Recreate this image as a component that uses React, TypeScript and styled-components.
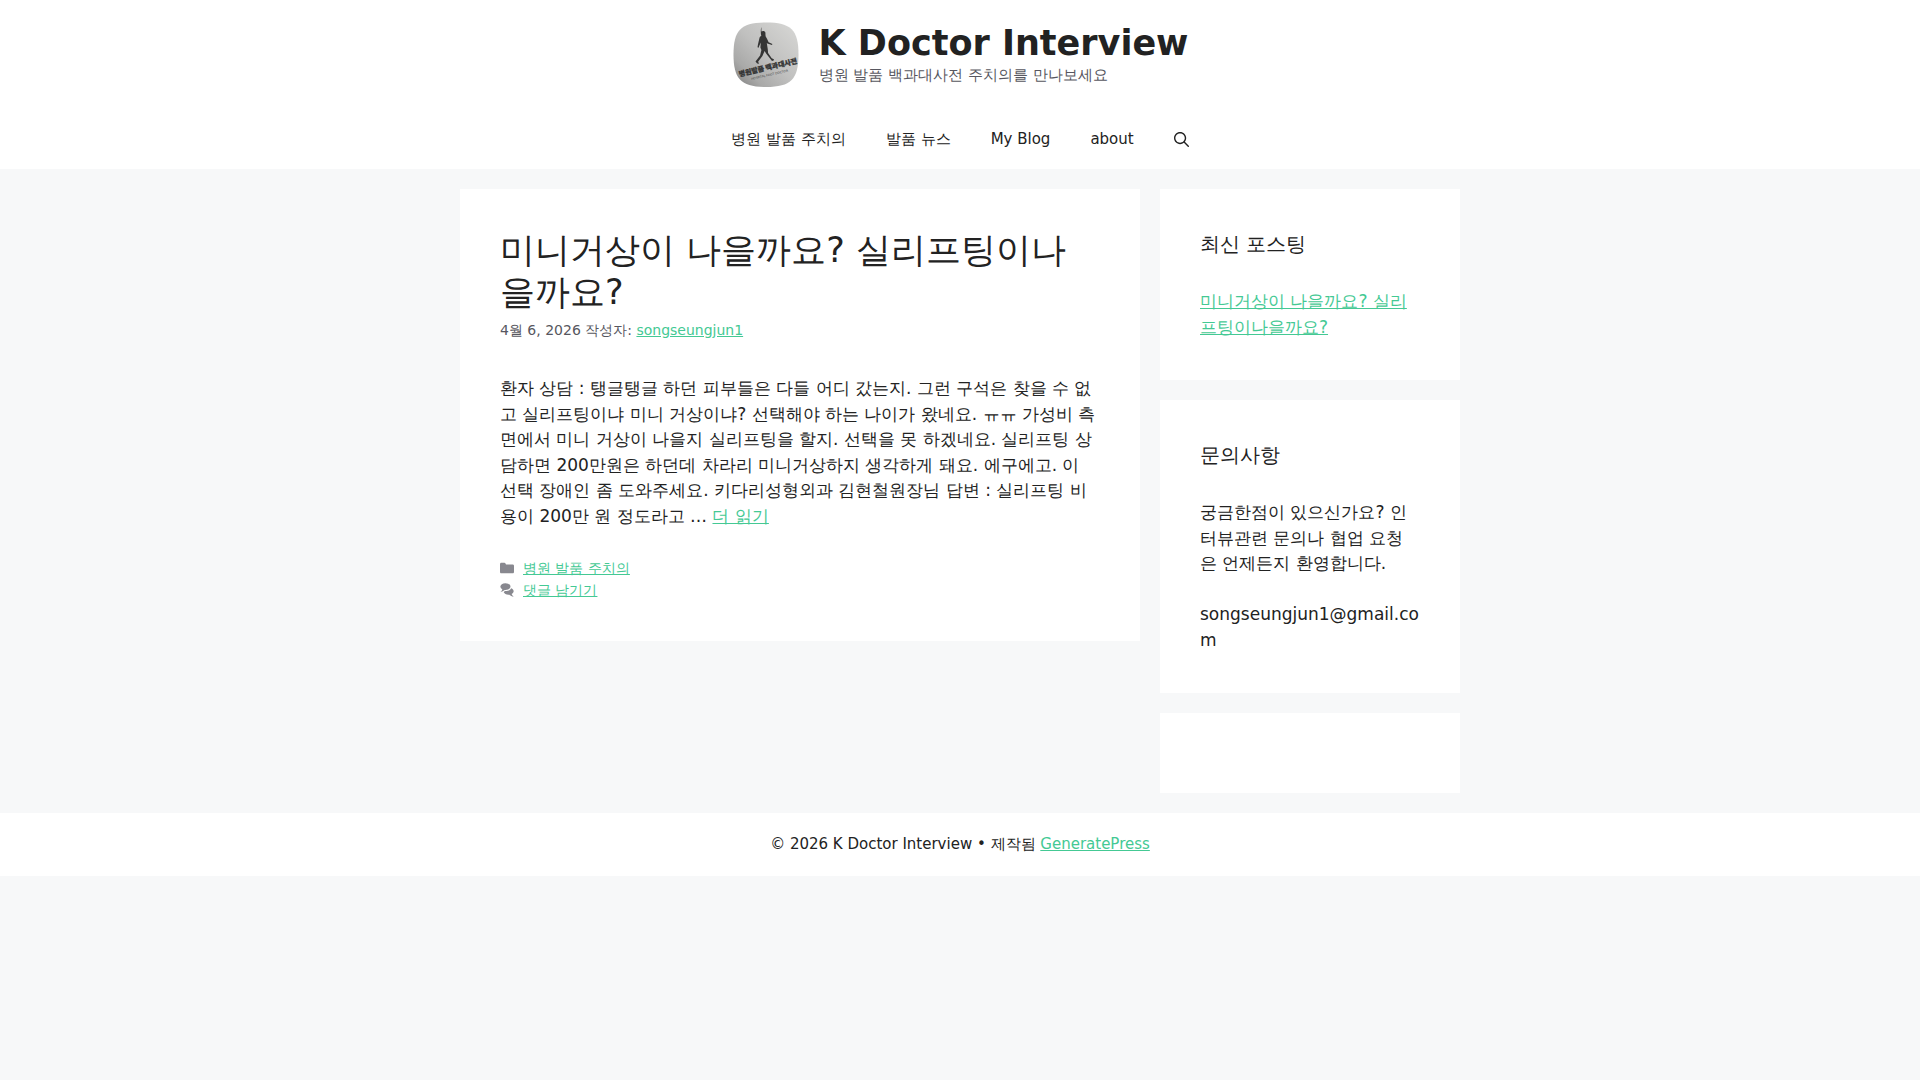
import React from 'react';
import styled, { createGlobalStyle } from 'styled-components';

const color = {
  page: '#f7f8f9',
  panel: '#ffffff',
  text: '#222222',
  muted: '#575760',
  link: '#44c994',
};

const GlobalStyle = createGlobalStyle`
  *, *::before, *::after { box-sizing: border-box; }
  body {
    margin: 0;
    background: ${color.page};
    color: ${color.text};
    font-family: "DejaVu Sans", sans-serif;
    font-size: 17px;
    line-height: 1.5;
    overflow-wrap: break-word;
  }
  h1, h2, p, ul { margin: 0; padding: 0; font-weight: 400; }
  ul { list-style: none; }
`;

const Link = styled.a`
  color: ${color.link};
  text-decoration: underline;
`;

const Header = styled.header`
  display: flex;
  justify-content: center;
  padding: 20px 40px;
  background: ${color.panel};
`;

const Branding = styled.div`
  display: flex;
  align-items: center;
  gap: 17px;
`;

const LogoLink = styled.a`
  display: block;
  svg { display: block; width: 70px; height: 69px; }
`;

const SiteTitle = styled.p`
  font-size: 35px;
  font-weight: 700;
  line-height: 42px;
  a { color: inherit; text-decoration: none; }
`;

const Tagline = styled.p`
  color: ${color.muted};
  font-size: 15px;
`;

const Nav = styled.nav`
  display: flex;
  justify-content: center;
  background: ${color.panel};
`;

const Menu = styled.ul`
  display: flex;
  flex-wrap: wrap;
  font-size: 15px;
  line-height: 60px;
`;

const MenuLink = styled.a`
  display: block;
  padding: 0 20px;
  color: ${color.text};
  text-decoration: none;
`;

const SearchButton = styled.button`
  display: flex;
  align-items: center;
  height: 60px;
  padding: 0 20px;
  border: 0;
  background: none;
  color: ${color.text};
  cursor: pointer;
`;

const Icon = styled.svg<{ $size: number }>`
  flex: none;
  width: ${(p) => p.$size}px;
  height: ${(p) => p.$size}px;
  fill: currentColor;
`;

const Columns = styled.div`
  display: grid;
  grid-template-columns: minmax(0, 1fr) 300px;
  align-items: start;
  gap: 20px;
  max-width: 1000px;
  margin: 0 auto;
  padding: 20px 0;

  @media (max-width: 768px) {
    grid-template-columns: minmax(0, 1fr);
  }
`;

const Article = styled.article`
  padding: 40px;
  background: ${color.panel};
`;

const EntryTitle = styled.h2`
  font-size: 35px;
  line-height: 42px;
  a { color: inherit; text-decoration: none; }
`;

const Meta = styled.div`
  margin-top: 6px;
  color: ${color.muted};
  font-size: 14px;
  line-height: 22px;
`;

const Summary = styled.p`
  margin-top: 35px;
`;

const EntryFooter = styled.footer`
  margin-top: 28px;
  color: ${color.muted};
  font-size: 14px;
  line-height: 22px;
`;

const FooterRow = styled.div`
  display: flex;
  align-items: center;
  gap: 9px;
  svg { opacity: 0.7; }
`;

const Sidebar = styled.aside`
  display: grid;
  gap: 20px;
`;

const Widget = styled.section`
  min-width: 0;
  padding: 40px;
  background: ${color.panel};
`;

const WidgetTitle = styled.h2`
  margin-bottom: 30px;
  font-size: 20px;
`;

const SiteFooter = styled.footer`
  padding: 20px 40px;
  background: ${color.panel};
  font-size: 15px;
  text-align: center;
`;

const SEARCH =
  'M208 48c-88.366 0-160 71.634-160 160s71.634 160 160 160 160-71.634 160-160S296.366 48 208 48zM0 208C0 93.125 93.125 0 208 0s208 93.125 208 208c0 48.741-16.765 93.566-44.843 129.024l133.826 134.018c9.366 9.379 9.355 24.575-.025 33.941-9.379 9.366-24.575 9.355-33.941-.025L337.238 370.987C301.747 399.167 256.839 416 208 416 93.125 416 0 322.875 0 208z';
const FOLDER =
  'M0 112c0-26.51 21.49-48 48-48h110.014a48 48 0 0143.592 27.907l12.349 26.791A16 16 0 00228.486 128H464c26.51 0 48 21.49 48 48v224c0 26.51-21.49 48-48 48H48c-26.51 0-48-21.49-48-48V112z';
const COMMENTS =
  'M132.838 329.973a435.298 435.298 0 0016.769-9.004c13.363-7.574 26.587-16.142 37.419-25.507 7.544.597 15.27.925 23.098.925 54.905 0 105.634-15.311 143.285-41.28 23.728-16.365 43.115-37.692 54.155-62.645 54.739 22.205 91.498 63.272 91.498 110.286 0 42.186-29.558 79.498-75.09 102.828 23.46 49.216 75.09 101.709 75.09 101.709s-115.837-38.35-154.424-78.46c-9.956 1.12-20.297 1.758-30.793 1.758-88.727 0-162.927-43.071-181.007-100.61z M383.371 132.502c0 70.603-82.961 127.787-185.216 127.787-10.496 0-20.837-.639-30.793-1.757-38.587 40.093-154.424 78.42-154.424 78.42s51.63-52.472 75.09-101.67c-45.532-23.321-75.09-60.619-75.09-102.78C12.938 61.9 95.9 4.716 198.155 4.716 300.41 4.715 383.37 61.9 383.37 132.502z';

const menu = ['병원 발품 주치의', '발품 뉴스', 'My Blog', 'about'];

function Logo() {
  return (
    <svg viewBox="0 0 70 69" role="img" aria-label="K Doctor Interview">
      <defs>
        <linearGradient id="stone" x1="1" y1="0.1" x2="0.1" y2="1">
          <stop offset="0" stopColor="#d6d6d4" />
          <stop offset="0.5" stopColor="#c0c0bf" />
          <stop offset="0.8" stopColor="#a9a9a8" />
          <stop offset="1" stopColor="#858585" />
        </linearGradient>
      </defs>
      <path
        d="M34 2.500C59 2.500 66.500 10 66.500 34.500S59 67 34 67 1.500 59 1.500 34.500 9 2.500 34 2.500z"
        fill="url(#stone)"
      />
      <g fill="#353535">
        <path d="M29.400 11.500c1-1 3.200-.8 3.800.6.500 1.500 0 3 .5 4.300l1.300 2.300 1.600 3.600 3.800 1.600-.4 1-4.600-1.400-.6-.6.900 5.800.400 4.300 3.600 5.300 2.200 1-.2 1.300-1.700.5-5.900-7.700-1.500-2.400-2.200 5.100-4.300 5.600 1 2-1.900-.3-1.700-1.800 4.600-6.200 1.300-5.300-1-2.600.4-5-1.500 3.300-.7 1.900-1.100-.4.500-3 1.300-5.600c.3-2 1.100-2.300 2-2.900-.8-2.500-.6-7 .1-8.800z" />
        <g transform="rotate(-13 36 48)" textAnchor="middle">
          <text x="36" y="50" fontSize="7" fontWeight="900" fontFamily='"Noto Sans CJK KR", sans-serif' stroke="#353535" strokeWidth="0.3">
            병원발품 백과대사전
          </text>
          <text x="36" y="56" fontSize="3" fontFamily='"DejaVu Sans", sans-serif' fill="#4a4a4a">
            HOSPITAL FOOT DOCTOR
          </text>
        </g>
      </g>
    </svg>
  );
}

export default function App() {
  return (
    <>
      <GlobalStyle />
      <Header>
        <Branding>
          <LogoLink href="#home"><Logo /></LogoLink>
          <div>
            <SiteTitle><a href="#home">K Doctor Interview</a></SiteTitle>
            <Tagline>병원 발품 백과대사전 주치의를 만나보세요</Tagline>
          </div>
        </Branding>
      </Header>
      <Nav>
        <Menu>
          {menu.map((label) => (
            <li key={label}><MenuLink href="#menu">{label}</MenuLink></li>
          ))}
          <li>
            <SearchButton type="button" aria-label="검색">
              <Icon $size={15} viewBox="0 0 512 512"><path d={SEARCH} /></Icon>
            </SearchButton>
          </li>
        </Menu>
      </Nav>
      <Columns>
        <main>
          <Article>
            <EntryTitle><a href="#post">미니거상이 나을까요? 실리프팅이나을까요?</a></EntryTitle>
            <Meta>4월 6, 2026 작성자: <Link href="#author">songseungjun1</Link></Meta>
            <Summary>
              환자 상담 : 탱글탱글 하던 피부들은 다들 어디 갔는지. 그런 구석은 찾을 수 없고 실리프팅이냐 미니 거상이냐? 선택해야 하는 나이가 왔네요. ㅠㅠ 가성비 측면에서 미니 거상이 나을지 실리프팅을 할지. 선택을 못 하겠네요. 실리프팅 상담하면 200만원은 하던데 차라리 미니거상하지 생각하게 돼요. 에구에고. 이 선택 장애인 좀 도와주세요. 키다리성형외과 김현철원장님 답변 : 실리프팅 비용이 200만 원 정도라고 … <Link href="#more">더 읽기</Link>
            </Summary>
            <EntryFooter>
              <FooterRow>
                <Icon $size={14} viewBox="0 0 512 512"><path d={FOLDER} /></Icon>
                <Link href="#category">병원 발품 주치의</Link>
              </FooterRow>
              <FooterRow>
                <Icon $size={14} viewBox="0 0 512 512"><path d={COMMENTS} /></Icon>
                <Link href="#respond">댓글 남기기</Link>
              </FooterRow>
            </EntryFooter>
          </Article>
        </main>
        <Sidebar>
          <Widget>
            <WidgetTitle>최신 포스팅</WidgetTitle>
            <ul>
              <li><Link href="#post">미니거상이 나을까요? 실리프팅이나을까요?</Link></li>
            </ul>
          </Widget>
          <Widget>
            <WidgetTitle>문의사항</WidgetTitle>
            <p>
              궁금한점이 있으신가요? 인터뷰관련 문의나 협업 요청은 언제든지 환영합니다.
              <br />
              <br />
              songseungjun1@gmail.com
            </p>
          </Widget>
          <Widget />
        </Sidebar>
      </Columns>
      <SiteFooter>
        © 2026 K Doctor Interview • 제작됨 <Link href="#generatepress">GeneratePress</Link>
      </SiteFooter>
    </>
  );
}
